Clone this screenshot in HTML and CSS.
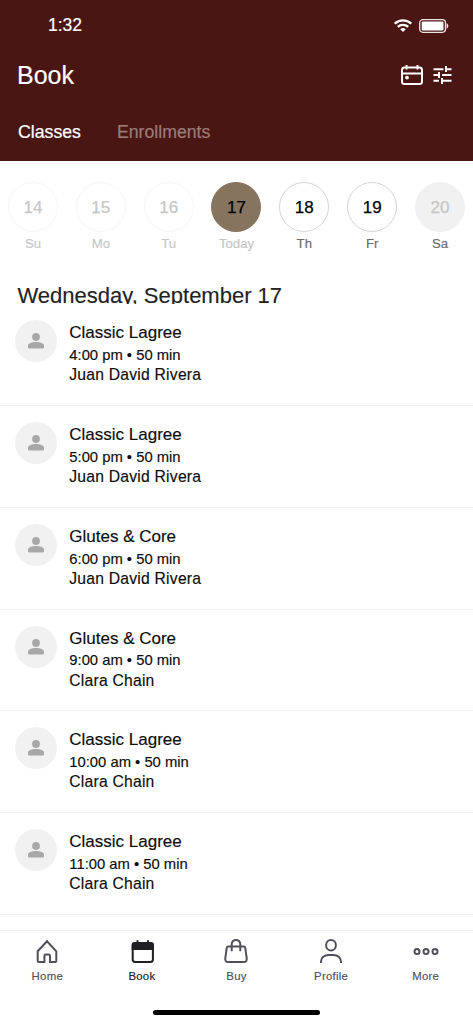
FILE: index.html
```html
<!DOCTYPE html>
<html lang="en">
<head>
<meta charset="utf-8">
<title>Book</title>
<link rel="stylesheet" href="styles.css">
</head>
<body>
<svg class="defs" aria-hidden="true">
  <symbol id="person" viewBox="0 0 18 18">
    <circle cx="9" cy="5" r="3.9"/>
    <path d="M1 15.200V13.600C1 11.300 4.900 10 9 10s8 1.300 8 3.600v1.600q0 1.200-1.200 1.200H2.200Q1 16.400 1 15.200z"/>
  </symbol>
</svg>
<div class="screen">
  <header class="header">
    <div class="status">
      <span class="time">1:32</span>
      <span class="status-icons">
        <svg width="18" height="14" viewBox="0 0 18 14" fill="none" stroke="#fff" stroke-width="2.300">
          <path d="M.8 4.700A11.700 11.700 0 0 1 17.200 4.700M3.800 7.900a7.500 7.500 0 0 1 10.400 0"/>
          <path d="M6.200 10.200a4.200 4.200 0 0 1 5.600 0L9 13.100z" fill="#fff" stroke="none"/>
        </svg>
        <svg width="30" height="14" viewBox="0 0 30 14">
          <rect x=".7" y=".7" width="25.800" height="12.600" rx="3.200" fill="none" stroke="#efe5e4" stroke-width="1.300"/>
          <rect x="2.700" y="2.600" width="21.800" height="8.800" rx="1" fill="#fff"/>
          <path d="M27.600 4.300c2.300.8 2.300 4.600 0 5.400z" fill="#efe5e4"/>
        </svg>
      </span>
    </div>
    <div class="title-row">
      <h1 class="title">Book</h1>
      <span class="actions">
        <svg width="22" height="20" viewBox="0 0 22 20" fill="none" stroke="#fff" stroke-width="2">
          <rect x="1" y="2.500" width="20" height="16.500" rx="2.500"/>
          <path d="M1 8.500h20M5.500 0v4.500M16.500 0v4.500"/>
          <circle cx="6" cy="12.600" r="1.900" fill="#fff" stroke="none"/>
        </svg>
        <svg width="19" height="18" viewBox="0 0 19 18" fill="none" stroke="#fff" stroke-width="2">
          <path d="M.5 3.200h10M13 3.200h5.500M.5 9h5.500M9 9h9.500M.5 14.800h5.500M9 14.800h9.500M13 0v6M6 6v6M9 12v6"/>
        </svg>
      </span>
    </div>
    <nav class="tabs"><span>Classes</span><span class="tab-muted">Enrollments</span></nav>
  </header>

  <section class="week">
    <div class="day past"><b>14</b><span>Su</span></div>
    <div class="day past"><b>15</b><span>Mo</span></div>
    <div class="day past"><b>16</b><span>Tu</span></div>
    <div class="day today"><b>17</b><span>Today</span></div>
    <div class="day"><b>18</b><span>Th</span></div>
    <div class="day"><b>19</b><span>Fr</span></div>
    <div class="day closed"><b>20</b><span>Sa</span></div>
  </section>
  <h2 class="date">Wednesday, September 17</h2>

  <main class="list">
    <article class="row"><span class="avatar"><svg><use href="#person"/></svg></span><div><p class="name">Classic Lagree</p><p class="when">4:00 pm • 50 min</p><p class="coach">Juan David Rivera</p></div></article>
    <article class="row"><span class="avatar"><svg><use href="#person"/></svg></span><div><p class="name">Classic Lagree</p><p class="when">5:00 pm • 50 min</p><p class="coach">Juan David Rivera</p></div></article>
    <article class="row"><span class="avatar"><svg><use href="#person"/></svg></span><div><p class="name">Glutes &amp; Core</p><p class="when">6:00 pm • 50 min</p><p class="coach">Juan David Rivera</p></div></article>
    <article class="row"><span class="avatar"><svg><use href="#person"/></svg></span><div><p class="name">Glutes &amp; Core</p><p class="when">9:00 am • 50 min</p><p class="coach">Clara Chain</p></div></article>
    <article class="row"><span class="avatar"><svg><use href="#person"/></svg></span><div><p class="name">Classic Lagree</p><p class="when">10:00 am • 50 min</p><p class="coach">Clara Chain</p></div></article>
    <article class="row"><span class="avatar"><svg><use href="#person"/></svg></span><div><p class="name">Classic Lagree</p><p class="when">11:00 am • 50 min</p><p class="coach">Clara Chain</p></div></article>
  </main>

  <footer class="bottom">
    <nav class="nav">
      <a class="item">
        <svg viewBox="0 0 26 26"><path d="M3.700 12.300 13 2.200l9.300 10.100v9.500q0 1.200-1.200 1.200H16v-6.200q0-1.400-1.400-1.400h-2.800q-1.400 0-1.400 1.400V23H4.900q-1.200 0-1.200-1.200z"/></svg>
        <span>Home</span>
      </a>
      <a class="item active">
        <svg viewBox="0 0 26 26"><rect x="3.700" y="4.200" width="20.200" height="18.800" rx="2.400"/><path d="M3.700 5.500q0-1.500 2-1.500h16q2.200 0 2.200 1.800V10H3.700z" fill="currentColor"/><path d="M8.500 1.300V5M19 1.300V5"/></svg>
        <span>Book</span>
      </a>
      <a class="item">
        <svg viewBox="0 0 26 26"><path d="M5.200 7.400h15.600q1.200 0 1.400 1.200l1.500 10.600q.4 3.800-3 3.800H5.300q-3.400 0-3-3.800L3.800 8.600Q4 7.400 5.200 7.400zM8.700 12.300V5.500C8.700-.6 17.300-.6 17.300 5.500v6.800"/></svg>
        <span>Buy</span>
      </a>
      <a class="item">
        <svg viewBox="0 0 26 26"><ellipse cx="13" cy="6.200" rx="4.900" ry="5.200"/><path d="M3 24v-1.500C3 18.500 6.500 16 10.500 16h5c4 0 7.500 2.500 7.500 6.500V24"/></svg>
        <span>Profile</span>
      </a>
      <a class="item">
        <svg viewBox="0 0 26 26"><circle cx="4" cy="12.500" r="2.500"/><circle cx="13" cy="12.500" r="2.500"/><circle cx="22" cy="12.500" r="2.500"/></svg>
        <span>More</span>
      </a>
    </nav>
    <div class="home-bar"></div>
  </footer>
</div>
</body>
</html>
```
FILE: styles.css
```css
* { box-sizing: border-box; }
body, h1, h2, p { margin: 0; font-weight: 400; }
body { background: #fff; font-family: "Liberation Sans", Arial, sans-serif; color: #0c0c0c; }
svg { display: block; }
.defs { width: 0; height: 0; position: absolute; }
.screen { width: 473px; height: 1024px; display: flex; flex-direction: column; overflow: hidden; }

.header { height: 161px; flex: none; background: #4a1613; color: #fff; }
.status { height: 50px; padding: 0 24.500px 0 48px; display: flex; align-items: center; justify-content: space-between; }
.time { font-size: 17.500px; line-height: 20px; -webkit-text-stroke: .2px; }
.status-icons { display: flex; gap: 7px; padding-top: 2px; }
.title-row { height: 50px; padding: 0 21.500px 0 17px; display: flex; align-items: center; justify-content: space-between; }
.title { font-size: 25px; line-height: 30px; -webkit-text-stroke: .2px; }
.actions { display: flex; align-items: center; gap: 10px; }
.tabs { height: 61px; padding: 21px 18px 0; display: flex; gap: 36px; font-size: 17.700px; line-height: 22px; -webkit-text-stroke: .2px; }
.tab-muted { color: #9b7c7a; }

.week { height: 118px; flex: none; padding: 21px 8px 0; display: flex; justify-content: space-between; }
.day { width: 50px; display: flex; flex-direction: column; align-items: center; font-size: 13.200px; color: #6c6c6c; }
.day b { width: 50px; height: 50px; border: 1px solid #d4d4d4; border-radius: 50%; display: flex; align-items: center; justify-content: center; padding-top: 1px; font-size: 17px; font-weight: 400; color: #000; -webkit-text-stroke: .25px; }
.day span { line-height: 16px; margin-top: 4px; -webkit-text-stroke: .15px; }
.day.past, .day.past b { color: #c6c6c6; }
.day.past b { border-color: #f5f5f5; }
.day.today { color: #c6c6c6; }
.day.today b { background: #87745e; border-color: #87745e; }
.day.closed b { background: #f1f1f1; border-color: #f1f1f1; color: #c6c6c6; }

.date { height: 25px; flex: none; padding-left: 17.500px; overflow: hidden; font-size: 22px; line-height: 33px; color: #222; -webkit-text-stroke: .15px; }

.list { height: 625.500px; flex: none; padding-top: .300px; }
.row { height: 101.750px; padding: 18.200px 15px 0; display: flex; gap: 12.300px; border-bottom: 1px solid #f1f1f1; }
.avatar { width: 42px; height: 42px; margin-top: -2.200px; border-radius: 50%; background: #f1f1f1; color: #a8a8a8; display: flex; align-items: center; justify-content: center; }
.avatar svg { width: 18px; height: 18px; fill: currentColor; }
.name { font-size: 17px; line-height: 22.600px; -webkit-text-stroke: .15px; }
.when { font-size: 14.800px; line-height: 20.400px; -webkit-text-stroke: .15px; }
.coach { font-size: 15.700px; line-height: 20px; letter-spacing: .220px; -webkit-text-stroke: .15px; }

.bottom { flex: 1; border-top: 1px solid #f1f1f1; display: flex; flex-direction: column; align-items: center; }
.nav { width: 473px; height: 79px; padding-top: 8px; display: grid; grid-template-columns: repeat(5, 94.600px); }
.item { display: flex; flex-direction: column; align-items: center; gap: 4px; color: #50505a; font-size: 11.400px; line-height: 14px; letter-spacing: .250px; -webkit-text-stroke: .15px; }
.item svg { width: 26px; height: 26px; overflow: visible; fill: none; stroke: currentColor; stroke-width: 2; }
.active { color: #202024; }
.home-bar { width: 167px; height: 5px; border-radius: 3px; background: #000; }
```
